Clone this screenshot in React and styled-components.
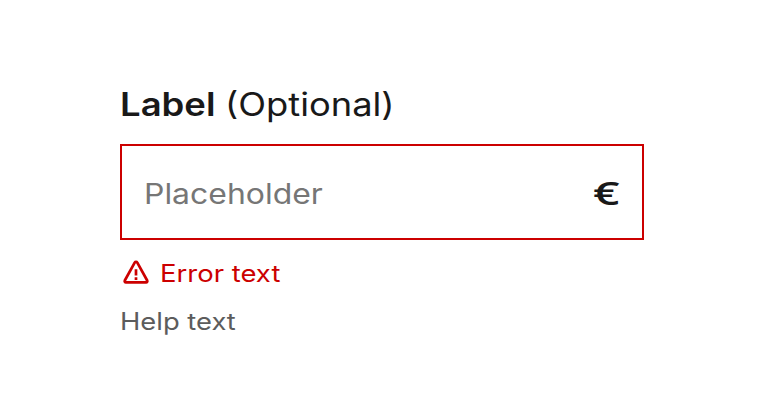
import React from "react"
import styled, { createGlobalStyle } from "styled-components"

const GlobalStyle = createGlobalStyle`
  *,
  *::before,
  *::after {
    box-sizing: border-box;
  }

  body {
    margin: 0;
    background: #ffffff;
    color: #191919;
    font-family: Inter, "Liberation Sans", sans-serif;
  }
`

const Field = styled.div`
  width: 524px;
  margin: 89px 0 0 120px;
`

// Inter has no extended cut, so the glyphs are widened instead
const Wide = styled.span`
  display: inline-block;
  white-space: nowrap;
  transform: scaleX(${props => props.$stretch});
  transform-origin: left center;
`

const Label = styled.label`
  display: flex;
  height: 32px;
  margin-bottom: 23px;
  font-size: 32px;
  line-height: 32px;
`

const LabelName = styled(Wide)`
  width: 105px;
  font-weight: 600;
`

const InputBox = styled.div`
  display: flex;
  justify-content: space-between;
  height: 96px;
  padding: 32px 22px 0;
  border: 2px solid #cc0000;
`

const Placeholder = styled(Wide)`
  color: #767676;
  font-size: 28px;
  line-height: 32px;
`

const Unit = styled(Wide)`
  width: 27px;
  font-family: "Open Sans", "Liberation Sans", sans-serif;
  font-size: 32px;
  font-weight: 650;
  line-height: 29px;
`

const Message = styled.div`
  display: flex;
  align-items: center;
  height: 32px;
  margin-top: 17px;
  color: ${props => props.$color};
  font-size: 24px;
  line-height: 32px;

  & + & {
    margin-top: 16px;
  }
`

const MessageText = styled(Wide)`
  padding-top: 2px;
`

const WarningIcon = styled.svg`
  flex: none;
  width: 32px;
  height: 32px;
  margin-right: 8px;
`

export default function App() {
  return (
    <>
      <GlobalStyle />
      <Field>
        <Label>
          <LabelName $stretch={1.14}>Label</LabelName>
          <Wide $stretch={1.135}>(Optional)</Wide>
        </Label>
        <InputBox>
          <Placeholder $stretch={1.14}>Placeholder</Placeholder>
          <Unit $stretch={1.45}>€</Unit>
        </InputBox>
        <Message $color="#cc0000">
          <WarningIcon viewBox="0 0 32 32" fill="none" stroke="currentColor">
            <path
              d="M14.7 5.7 4.8 23.5a1.3 1.3 0 0 0 1.1 1.9h20.2a1.3 1.3 0 0 0 1.1-1.9L17.3 5.7a1.5 1.5 0 0 0-2.6 0Z"
              strokeWidth="2.7"
              strokeLinejoin="round"
            />
            <path d="M16 12.3v6.2M16 20.2v2.8" strokeWidth="2.7" />
          </WarningIcon>
          <MessageText $stretch={1.145}>Error text</MessageText>
        </Message>
        <Message $color="#5c5c5c">
          <MessageText $stretch={1.14}>Help text</MessageText>
        </Message>
      </Field>
    </>
  )
}
